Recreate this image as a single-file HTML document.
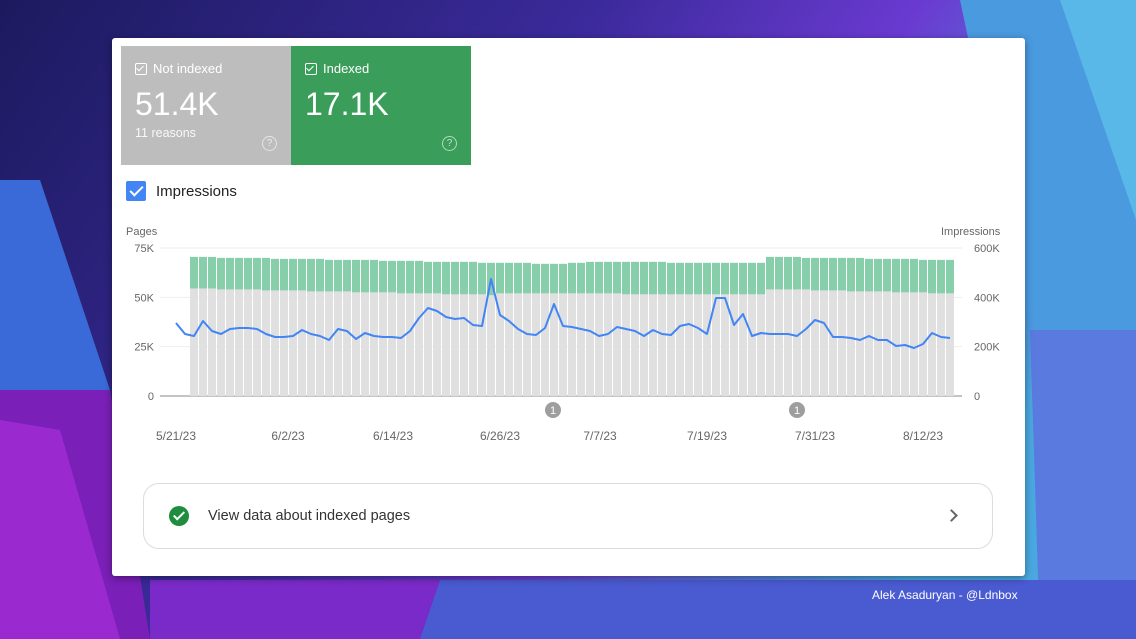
<!DOCTYPE html>
<html><head><meta charset="utf-8"><style>
html,body{margin:0;padding:0;width:1136px;height:639px;overflow:hidden;font-family:"Liberation Sans",Arial,sans-serif}
#bg{position:absolute;left:0;top:0}
.card{position:absolute;left:112px;top:38px;width:913px;height:538px;background:#fff;border-radius:3px;box-shadow:0 2px 8px rgba(0,0,0,.4)}
.tile{position:absolute;top:8px;height:119px;color:#fff}
.t1{left:9px;width:170px;background:#bdbdbd}
.t2{left:179px;width:180px;background:#3a9e5a}
.lab{position:absolute;left:14px;top:15px;font-size:13px;display:flex;align-items:center}
.cb{width:10px;height:10px;border:1.3px solid #fff;border-radius:2px;margin-right:6px;position:relative}
.cb:after{content:"";position:absolute;left:2px;top:0px;width:3px;height:6px;border:solid #fff;border-width:0 1.3px 1.3px 0;transform:rotate(45deg)}
.big{position:absolute;left:14px;top:40px;font-size:32px}
.sub{position:absolute;left:14px;top:80px;font-size:12.5px;opacity:.9}
.q{position:absolute;right:14px;bottom:14px;width:13px;height:13px;border:1.3px solid rgba(255,255,255,.6);border-radius:50%;font-size:10px;line-height:13px;text-align:center;color:rgba(255,255,255,.7)}
.imp{position:absolute;left:14px;top:143px;display:flex;align-items:center;font-size:15px;color:#222}
.bcb{width:20px;height:20px;background:#4285f4;border-radius:2px;margin-right:10px;position:relative}
.bcb:after{content:"";position:absolute;left:7px;top:2px;width:5px;height:11px;border:solid #fff;border-width:0 2.4px 2.4px 0;transform:rotate(45deg)}
.btn{position:absolute;left:31px;top:445px;width:848px;height:64px;border:1px solid #dadce0;border-radius:16px}
.btn .t{position:absolute;left:64px;top:24px;font-size:14.5px;color:#333}
.chk{position:absolute;left:25px;top:22px;width:20px;height:20px;border-radius:50%;background:#1e8e3e}
.chk:after{content:"";position:absolute;left:7px;top:3px;width:4px;height:9px;border:solid #fff;border-width:0 2.4px 2.4px 0;transform:rotate(45deg)}
.chev{position:absolute;right:36px;top:27px;width:7px;height:7px;border:solid #666;border-width:2px 2px 0 0;transform:rotate(45deg)}
.credit{position:absolute;left:872px;top:588px;color:#fff;font-size:12px}
</style></head><body>
<svg id="bg" width="1136" height="639">
<defs>
<linearGradient id="g1" x1="0" y1="0" x2="1" y2="0.4"><stop offset="0" stop-color="#1c1a5e"/><stop offset=".45" stop-color="#3a2a9a"/><stop offset=".7" stop-color="#6a3ad0"/><stop offset="1" stop-color="#4aa8e0"/></linearGradient>
</defs>
<rect width="1136" height="639" fill="url(#g1)"/>
<polygon points="0,180 40,180 110,390 0,390" fill="#3a6ad8"/>
<polygon points="0,390 110,390 150,639 0,639" fill="#7a1fb8"/>
<polygon points="0,420 60,430 120,639 0,639" fill="#9a2ad0"/>
<polygon points="1020,0 1136,0 1136,300 1080,330" fill="#5ab8e8"/>
<polygon points="960,0 1060,0 1136,220 1136,330 1030,330" fill="#4a9ae0"/>
<polygon points="1030,330 1136,330 1136,639 1040,639" fill="#5a7ae0"/>
<polygon points="440,580 1136,580 1136,639 420,639" fill="#4a5ad0"/>
<polygon points="150,580 440,580 420,639 150,639" fill="#7a2ac8"/>
</svg>
<div class="card">
 <div class="tile t1"><div class="lab"><span class="cb"></span>Not indexed</div><div class="big">51.4K</div><div class="sub">11 reasons</div><div class="q">?</div></div>
 <div class="tile t2"><div class="lab"><span class="cb"></span>Indexed</div><div class="big">17.1K</div><div class="q">?</div></div>
 <div class="imp"><span class="bcb"></span>Impressions</div>
 <svg id="ch" width="913" height="240" style="position:absolute;left:0;top:182px" font-family="Liberation Sans, Arial, sans-serif" font-size="11" fill="#666"></svg>
 <div class="btn"><span class="chk"></span><span class="t">View data about indexed pages</span><span class="chev"></span></div>
</div>
<div class="credit">Alek Asaduryan - @Ldnbox</div>
<script>
var ox=112,oy=220,s='';
function Y(v){return 396-v*1.973-oy;}
s+='<text x="14" y="15">Pages</text><text x="829" y="15">Impressions</text>';
[[0,'0','0'],[25,'25K','200K'],[50,'50K','400K'],[75,'75K','600K']].forEach(function(a){var y=Y(a[0]);
s+='<line x1="48" x2="850" y1="'+y+'" y2="'+y+'" stroke="'+(a[0]?'#eee':'#888')+'"/>';
s+='<text x="42" y="'+(y+4)+'" text-anchor="end">'+a[1]+'</text><text x="862" y="'+(y+4)+'">'+a[2]+'</text>';});
function lerp(p,i){for(var k=0;k<p.length-1;k++){if(i<=p[k+1][0]){var t=(i-p[k][0])/(p[k+1][0]-p[k][0]);return p[k][1]+t*(p[k+1][1]-p[k][1]);}}return p[p.length-1][1];}
var gp=[[0,54.5],[33,51.2],[34,52],[60,51.5],[61,51.7],[63,51.7],[64,54.2],[84,52]];
var tp=[[0,70.5],[40,67],[45,68],[60,67.5],[63,67.5],[64,70.5],[84,69]];
for(var i=0;i<85;i++){var x=190-ox+i*9;var g=Math.round(lerp(gp,i)*2)/2,t=Math.round(lerp(tp,i)*2)/2;
s+='<rect x="'+x+'" y="'+Y(t)+'" width="8" height="'+(Y(g)-Y(t))+'" fill="#87ceab"/>';
s+='<rect x="'+x+'" y="'+Y(g)+'" width="8" height="'+(Y(0)-Y(g))+'" fill="#e0e0e0"/>';}
var ly=[323,334,336,321,331,334,329,328,328,329,334,337,337,336,330,334,336,340,329,331,339,333,336,337,337,338,331,318,308,311,317,319,318,325,326,279,315,321,329,334,335,328,304,326,327,329,331,336,334,327,329,331,336,330,334,335,326,324,328,334,298,298,325,314,336,333,334,334,334,336,329,320,323,337,337,338,340,336,340,340,346,345,348,344,333,337,338];
var pts=ly.map(function(y,i){return (176-ox+i*9)+','+(y-oy)}).join(' ');
s+='<polyline points="'+pts+'" fill="none" stroke="#4285f4" stroke-width="2" stroke-linejoin="round"/>';
[[553,'1'],[797,'1']].forEach(function(a){s+='<circle cx="'+(a[0]-ox)+'" cy="'+(410-oy)+'" r="8" fill="#9e9e9e"/><text x="'+(a[0]-ox)+'" y="'+(414-oy)+'" fill="#fff" text-anchor="middle">1</text>';});
[[176,'5/21/23'],[288,'6/2/23'],[393,'6/14/23'],[500,'6/26/23'],[600,'7/7/23'],[707,'7/19/23'],[815,'7/31/23'],[923,'8/12/23']].forEach(function(a){s+='<text x="'+(a[0]-ox)+'" y="'+(440-oy)+'" text-anchor="middle" font-size="12">'+a[1]+'</text>';});
document.getElementById('ch').innerHTML=s;
</script>
</body></html>
